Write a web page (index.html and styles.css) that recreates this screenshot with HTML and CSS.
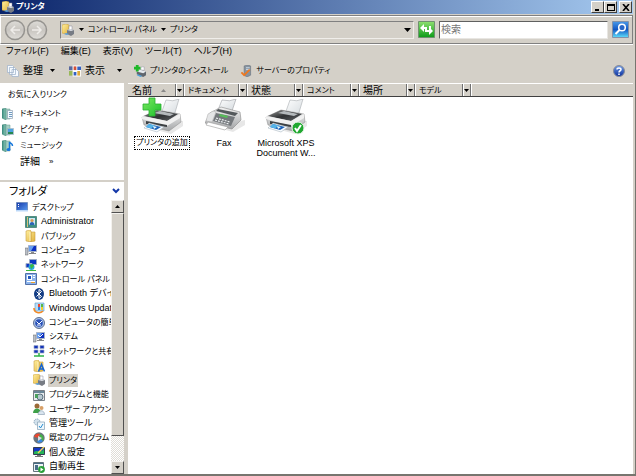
FILE: index.html
```html
<!DOCTYPE html>
<html lang="ja">
<head>
<meta charset="utf-8">
<title>プリンタ</title>
<link rel="stylesheet" href="styles.css">
</head>
<body>
<svg class="defs" aria-hidden="true">
  <defs>
    <linearGradient id="gGreen" x2="0" y2="1"><stop stop-color="#8ee070"/><stop offset="1" stop-color="#0c9a18"/></linearGradient>
    <linearGradient id="gPlus" x2="1" y2="1"><stop stop-color="#7ae860"/><stop offset="1" stop-color="#1cc02c"/></linearGradient>
    <linearGradient id="gBlue" x2="0" y2="1"><stop stop-color="#4a9ae8"/><stop offset=".5" stop-color="#1257c4"/><stop offset="1" stop-color="#5fe0fa"/></linearGradient>
    <linearGradient id="gBall" x2="0" y2="1"><stop stop-color="#6f9ce8"/><stop offset="1" stop-color="#0a2f9c"/></linearGradient>
    <linearGradient id="gFolder" x2="1" y2="1"><stop stop-color="#fff0a0"/><stop offset="1" stop-color="#e2b23c"/></linearGradient>
    <linearGradient id="gBook" x2="1" y2="0"><stop stop-color="#3a8c80"/><stop offset="1" stop-color="#8fc8b8"/></linearGradient>
    <linearGradient id="gScreen" x2="1" y2="1"><stop stop-color="#1436a8"/><stop offset="1" stop-color="#5a9cf0"/></linearGradient>
    <linearGradient id="gNav" x2="0" y2="1"><stop stop-color="#dedcd8"/><stop offset=".5" stop-color="#c8c5c0"/><stop offset="1" stop-color="#e0deda"/></linearGradient>
    <linearGradient id="gDark" x2="1" y2="1"><stop stop-color="#999"/><stop offset=".5" stop-color="#303234"/><stop offset="1" stop-color="#606468"/></linearGradient>
    <linearGradient id="gBody" x2="0" y2="1"><stop stop-color="#f4f4f4"/><stop offset="1" stop-color="#a4a6a8"/></linearGradient>
    <linearGradient id="gPaper" x2="1" y2="1"><stop stop-color="#fff"/><stop offset="1" stop-color="#d4dade"/></linearGradient>
  </defs>
  <symbol id="i-printer" viewBox="0 0 12 12"><path fill="url(#gFolder)" stroke="#c89a30" stroke-width=".5" d="M0 1l4-1 3 1v8l-3 1-4-1z"/><path fill="#fff" stroke="#889" stroke-width=".5" d="M7 2h3v4H7z"/><path fill="#777c84" d="M5 6l3-1 4 1v4l-3 2-4-2z"/><path fill="#dfe3e8" d="M5 6l4 1 3-1-4-1z"/><path fill="#58a0e0" d="M4 9l3 1-2 1-3-1z"/></symbol>
  <symbol id="i-book" viewBox="0 0 12 12"><path fill="url(#gBook)" stroke="#3a8070" stroke-width=".5" d="M0 1l4-1v12l-4-2z"/><path fill="#a6d0c4" stroke="#609a8c" stroke-width=".5" d="M4 1h4v10H4z"/></symbol>
  <symbol id="i-doc" viewBox="0 0 12 12"><use href="#i-book"/><path fill="#f7faff" stroke="#8395aa" stroke-width=".6" d="M5.500 2.500h5v8h-5z"/><path stroke="#6d9ac0" d="M7 4.500h3M7 6.500h3M7 8.500h3"/></symbol>
  <symbol id="i-pic" viewBox="0 0 12 12"><use href="#i-book"/><path fill="#fff" stroke="#7698b0" stroke-width=".6" d="M5.500 4.500h6v6h-6z"/><path fill="#4aa0e0" d="M6 5h5v3H6z"/><path fill="#258850" d="M6 8h5v2H6z"/></symbol>
  <symbol id="i-music" viewBox="0 0 12 12"><use href="#i-book"/><path fill="none" stroke="#1676dc" stroke-width="1.500" d="M7.500 9V2c1 2 3 1 3 4"/><ellipse cx="6.500" cy="9.500" rx="2" ry="1.600" fill="#1676dc"/></symbol>
  <symbol id="i-desktop" viewBox="0 0 12 12"><path fill="url(#gScreen)" stroke="#6a88b8" stroke-width=".8" d="M.5 1.500h11v8H.5z"/><path fill="#bcd8f8" d="M0 9h12v1.500H0z"/><path fill="#fff" d="M2 3h1v1H2zM2 5h1v1H2z"/></symbol>
  <symbol id="i-user" viewBox="0 0 12 12"><path fill="#3d8f82" stroke="#286658" stroke-width=".6" d="M.5.5h11v11H.5z"/><path fill="#d8c078" d="M2 1h1v10H2z"/><path fill="#cfe6f4" d="M4 2h6v7H4z"/><circle cx="7" cy="4.500" r="1.600" fill="#d49a52"/><path fill="#2b64b4" d="M4.500 9c0-4 5-4 5 0z"/></symbol>
  <symbol id="i-folder" viewBox="0 0 12 12"><path fill="url(#gFolder)" stroke="#cba040" stroke-width=".6" d="M1 1l4-1 1 1v11l-5-1zM6 2h4v9l-4 1z"/><path stroke="#fff9cc" d="M5 2v9"/></symbol>
  <symbol id="i-computer" viewBox="0 0 12 12"><path fill="#b9bec6" stroke="#666" stroke-width=".5" d="M0 4h3v7H0z"/><path fill="#0c30c0" stroke="#a8b4c8" d="M3.500 1.500h8v6h-8z"/><path fill="#69a0f0" d="M4 2l5 0-3 5H4z"/><path fill="#888" d="M6 8h3v1h2v1H4V9h2z"/></symbol>
  <symbol id="i-network" viewBox="0 0 12 12"><path fill="#0d36c4" stroke="#9caac4" d="M4.500.5h7v5h-7zM1 4.500h6v4H1z"/><circle cx="6.500" cy="8" r="3" fill="#28a8d8"/><path fill="#3bb840" d="M5 6l3-1 1 2-3 3zM1 11h10v1H1z"/></symbol>
  <symbol id="i-panel" viewBox="0 0 12 12"><path fill="#8cb4ec" stroke="#5370a8" d="M.5.5h11v11H.5z"/><path fill="#fff" d="M2 2h5v5H2zM8 2h2v1H8zM8 4h2v1H8zM2 8h8v1H2z"/><path fill="#2458c0" d="M3 3h3v3H3z"/><path fill="#e8a030" d="M6 9h4v1H6z"/></symbol>
  <symbol id="i-bt" viewBox="0 0 12 12"><ellipse cx="6" cy="6" rx="5" ry="6" fill="#123c84"/><path fill="none" stroke="#fff" d="M3.500 3.500l5 5L6 10.500v-9l2.500 2-5 5"/></symbol>
  <symbol id="i-update" viewBox="0 0 12 12"><path fill="#b6def8" stroke="#5696c8" stroke-width=".6" d="M2 1h9v8H2z"/><path fill="#f04830" d="M5 2h2v3H5z"/><path fill="#56b848" d="M8 2h2v3H8z"/><path fill="#3482e0" d="M5 5h2v3H5z"/><path fill="#f8cc28" d="M8 5h2v3H8z"/><path fill="none" stroke="#f08a28" stroke-width="1.600" d="M1 6c0 5 6 6 9 3"/></symbol>
  <symbol id="i-clock" viewBox="0 0 12 12"><circle cx="6" cy="6" r="5.500" fill="#a8c0e8" stroke="#607090"/><circle cx="6" cy="6" r="3.800" fill="#2850b8"/><path fill="none" stroke="#fff" d="M3.500 4.500L6 7l3-3M4 8h4"/></symbol>
  <symbol id="i-system" viewBox="0 0 12 12"><use href="#i-computer"/><path fill="none" stroke="#fff" d="M5 4l2 2 3-3"/></symbol>
  <symbol id="i-share" viewBox="0 0 12 12"><path fill="#1434b8" stroke="#9ba8c8" stroke-width=".7" d="M1 .5h4v3H1zM7 .5h4v3H7zM1 5h4v3H1zM7 5h4v3H7z"/><path stroke="#30b448" stroke-width="1.500" d="M6 8v3M1 11h10"/></symbol>
  <symbol id="i-font" viewBox="0 0 12 12"><use href="#i-folder"/><path fill="none" stroke="#1464d4" stroke-width="1.500" d="M5.500 11.500l3-7 3 7M7 9h3"/></symbol>
  <symbol id="i-programs" viewBox="0 0 12 12"><path fill="#e8ebee" stroke="#7a8088" d="M.5 1.500h11v10H.5z"/><path fill="#6b8798" d="M1 2h10v2H1z"/><circle cx="7" cy="8" r="3" fill="#b7c7d0" stroke="#5c7180"/><path fill="#4ca060" d="M2 5h3v4H2z"/></symbol>
  <symbol id="i-users" viewBox="0 0 12 12"><circle cx="4" cy="3" r="2.500" fill="#9c6a38"/><path fill="#3ea048" d="M0 10c0-6 8-6 8 0z"/><circle cx="8.500" cy="5" r="2" fill="#d8a068"/><path fill="#d8e4ee" stroke="#8498ac" stroke-width=".6" d="M5 11.500c0-5 6.500-5 6.500 0z"/></symbol>
  <symbol id="i-tools" viewBox="0 0 12 12"><circle cx="4" cy="4" r="3" fill="#d2e1ec" stroke="#7898b0" stroke-dasharray="1 1"/><path fill="#eef6fc" stroke="#8fa9bc" stroke-width=".8" d="M4.500 4h7v7.500h-7z"/><path fill="none" stroke="#238cd0" d="M6 8l1.500 2L10 6"/></symbol>
  <symbol id="i-default" viewBox="0 0 12 12"><circle cx="6" cy="6" r="5.700" fill="#68747c"/><path fill="#e84830" d="M6 6L1 5c1-4 5-4 6-3z"/><path fill="#44b048" d="M6 6l1-4c4 1 4 5 3 7z"/><path fill="#3888e0" d="M6 6l4 3c-3 3-6 1-6 1z"/><path fill="#d8dce0" d="M5 4l4 2-4 3z"/></symbol>
  <symbol id="i-personal" viewBox="0 0 12 12"><path fill="#1438c4" stroke="#333c50" d="M.5 1.500h11v7H.5z"/><path fill="#25b458" d="M1 6c4-3 6 2 10-3v5H1z"/><path stroke="#f8d858" stroke-width="1.500" d="M5 7l6-6"/><path fill="#777" d="M4 9h4v1h2v1H2v-1h2z"/></symbol>
  <symbol id="i-autoplay" viewBox="0 0 12 12"><path fill="#eef3f6" stroke="#63747c" d="M.5 1.500h10v9H.5z"/><path fill="#486e88" d="M1 2h9v1H1zM2 4h3v5H2z"/><circle cx="8.500" cy="8.500" r="3.400" fill="#28a038"/><path fill="#fff" d="M7.500 6.500l3 2-3 2z"/></symbol>
  <symbol id="i-organize" viewBox="0 0 12 12"><path fill="#f6faff" stroke="#9cb0c8" stroke-width=".7" d="M.5.5h5l1 1v6h-6zM2.500 2.500h5l1 1v6h-6zM5 4.500h4.500l2 2v5H5z"/></symbol>
  <symbol id="i-view" viewBox="0 0 13 12"><path fill="#5868a0" d="M0 1h4v4H0z"/><path fill="#98b858" d="M0 6h4v5H0z"/><path fill="#fff" d="M4 0h9v12H4z"/><path fill="#d05038" d="M5 1h3v4H5z"/><path fill="#3460c0" d="M9 1h4v4H9zM5 7h3v4H5z"/><path fill="#e0a838" d="M9 6h3v5H9z"/></symbol>
  <symbol id="i-add" viewBox="0 0 13 13"><path fill="#61676e" d="M3 7l4-2 6 2v4l-3 2-7-3z"/><path fill="#e6eaed" d="M3 7l7 2 3-2-6-2z"/><path fill="#fff" stroke="#889" stroke-width=".5" d="M8 2h3v4L7 5z"/><path fill="#4aa0dc" d="M4 10l5 2-2 1-4-2z"/><path fill="#1eb828" d="M2 0h3v2h2v3H5v2H2V5H0V2h2z"/></symbol>
  <symbol id="i-server" viewBox="0 0 12 13"><path fill="#8793a0" stroke="#606c78" stroke-width=".6" d="M4 1l4-1 3 1v10l-4 2-3-2z"/><path stroke="#cfe0ec" d="M6 3h4M6 5h4"/><path fill="none" stroke="#ee7820" stroke-width="2" d="M1 8l3 3 6-6"/></symbol>
  <symbol id="big-printer" viewBox="0 0 42 36">
    <path fill="#bbb" opacity=".35" d="M8 29l22 6 12-8v-5L14 24z"/>
    <path fill="url(#gPaper)" stroke="#a8acb0" stroke-width=".6" d="M25 1q7 2 13-1l-5 17-13-2z"/>
    <path fill="url(#gBody)" stroke="#888" stroke-width=".5" d="M1 18l15-7 23 4 1 8-12 9L3 26z"/>
    <path fill="url(#gDark)" d="M3 17l13-6 21 4-11 7z"/>
    <path fill="#b4b9bc" d="M13 14l6-2 14 3-4 2z"/>
    <path fill="#f0f0f0" d="M26 22l13-7v4l-13 8L1 20v-3z"/>
    <path fill="#3c4043" d="M5 22l21 4v2L5 25z"/>
    <path fill="#f8fcff" stroke="#9caab4" stroke-width=".5" d="M8 24l15 4-7 5-13-4z"/>
    <path fill="#1b60b8" d="M8 25l12 3-5 3-10-3z"/><path fill="#55b4e8" d="M8 25l6 1.500-4 3-5-1.500z"/><path fill="#e4f8f8" d="M12 27l4 1-3 2z"/>
  </symbol>
  <symbol id="big-fax" viewBox="0 0 40 36">
    <path fill="#bbb" opacity=".35" d="M10 28l18 5 12-7v-5z"/>
    <path fill="url(#gPaper)" stroke="#9ca0a4" stroke-width=".6" d="M17 1q8 2 14-1l-4 12-14-1z"/>
    <path fill="url(#gBody)" stroke="#888" stroke-width=".6" d="M5 14l11-6 19 5 1 8-9 9L0 24z"/>
    <path fill="#54595c" d="M13 10l20 4-3 3-19-5z"/>
    <path fill="#e4e5e6" stroke="#aaa" stroke-width=".5" d="M3 15l5-3 3 1-4 10-6-1z"/>
    <path fill="#74787c" d="M11 14l19 4-4 9-18-5z"/>
    <path fill="#56bd58" d="M15 15l8 2-1 2-8-2z"/>
    <path stroke="#edf0f2" stroke-width="1.200" stroke-dasharray="2 1" d="M11 19l14 4M10 21l14 4"/>
    <path fill="#fff" stroke="#9b9b9b" stroke-width=".6" d="M3 23l20 5-3 3-19-5z"/>
  </symbol>
  <symbol id="drop" viewBox="0 0 5 3"><path d="M0 0h5L2.500 3z"/></symbol>
</svg>

<div class="window">
  <header class="titlebar">
    <svg class="icon"><use href="#i-printer"/></svg>
    <h1>プリンタ</h1>
    <button class="cap" aria-label="最小化"><svg viewBox="0 0 8 7"><path d="M1 5h4v2H1z"/></svg></button>
    <button class="cap" aria-label="最大化"><svg viewBox="0 0 8 7"><path fill-rule="evenodd" d="M0 0h8v7H0zM1 2v4h6V2z"/></svg></button>
    <button class="cap close" aria-label="閉じる"><svg viewBox="0 0 8 7"><path fill="none" stroke="#000" stroke-width="1.600" d="M1 0l6 7M7 0L1 7"/></svg></button>
  </header>

  <div class="navbar">
    <button class="round" aria-label="戻る"><svg viewBox="0 0 22 22"><circle cx="11" cy="11" r="9.500" fill="url(#gNav)" stroke="#969490" stroke-width="1.500"/><path fill="none" stroke="#efedea" stroke-width="1.500" d="M16 11H7M11 7l-4 4 4 4"/></svg></button>
    <button class="round" aria-label="進む"><svg viewBox="0 0 22 22"><circle cx="11" cy="11" r="9.500" fill="url(#gNav)" stroke="#969490" stroke-width="1.500"/><path fill="none" stroke="#efedea" stroke-width="1.500" d="M6 11h9M11 7l4 4-4 4"/></svg></button>
    <nav class="address" aria-label="アドレス">
      <svg class="icon"><use href="#i-printer"/></svg>
      <svg class="drop"><use href="#drop"/></svg><a href="#">コントロール パネル</a>
      <svg class="drop"><use href="#drop"/></svg><a href="#">プリンタ</a>
      <button class="history" aria-label="履歴"><svg viewBox="0 0 7 4"><path d="M0 0h7L3.500 4z"/></svg></button>
    </nav>
    <button class="square" aria-label="更新"><svg viewBox="0 0 17 17"><path fill="url(#gGreen)" stroke="#709070" d="M.5.5h16v16H.5z"/><path fill="#fff" d="M2 7l4-4v3h3v5H7V8H6v3zM15 10l-4 4v-3H9V9h2V5h2v3z"/></svg></button>
    <input class="search" type="search" placeholder="検索" aria-label="検索">
    <button class="square" aria-label="検索を実行"><svg viewBox="0 0 17 17"><path fill="url(#gBlue)" stroke="#8492a8" d="M.5.5h16v16H.5z"/><circle cx="10" cy="6.500" r="3.300" fill="#2867c8" stroke="#fff" stroke-width="1.500"/><path stroke="#fff" stroke-width="2" d="M7.500 9l-4 4"/></svg></button>
  </div>

  <nav class="menubar" aria-label="メニュー">
    <button>ファイル(F)</button><button>編集(E)</button><button>表示(V)</button><button>ツール(T)</button><button>ヘルプ(H)</button>
  </nav>

  <div class="toolbar">
    <button class="organize"><svg class="icon"><use href="#i-organize"/></svg>整理<svg class="drop"><use href="#drop"/></svg></button>
    <button class="view"><svg class="icon"><use href="#i-view"/></svg>表示<svg class="drop"><use href="#drop"/></svg></button>
    <button class="install kana"><svg class="icon"><use href="#i-add"/></svg>プリンタのインストール</button>
    <button class="server kana"><svg class="icon"><use href="#i-server"/></svg>サーバーのプロパティ</button>
    <button class="help" aria-label="ヘルプ"><svg viewBox="0 0 12 12"><circle cx="6" cy="6" r="5.500" fill="url(#gBall)" stroke="#888c98"/><path fill="none" stroke="#fff" stroke-width="1.500" d="M4 4.500c0-2 4-2 4 0 0 1.500-2 1-2 3M6 8.500v1.500"/></svg></button>
  </div>

  <div class="body">
    <aside class="sidebar">
      <section class="favorites kana">
        <h2>お気に入りリンク</h2>
        <ul>
          <li><a href="#"><svg class="icon"><use href="#i-doc"/></svg>ドキュメント</a></li>
          <li><a href="#"><svg class="icon"><use href="#i-pic"/></svg>ピクチャ</a></li>
          <li><a href="#"><svg class="icon"><use href="#i-music"/></svg>ミュージック</a></li>
          <li class="more"><a href="#">詳細 <span>»</span></a></li>
        </ul>
      </section>
      <button class="folders">フォルダ<svg viewBox="0 0 8 6"><path fill="none" stroke="#1438a8" stroke-width="2" d="M1 1l3 3 3-3"/></svg></button>
      <div class="tree-pane">
        <ul class="tree">
          <li class="l0"><a href="#"><svg class="icon"><use href="#i-desktop"/></svg><span class="kana">デスクトップ</span></a></li>
          <li class="l1"><a href="#"><svg class="icon"><use href="#i-user"/></svg><span>Administrator</span></a></li>
          <li class="l1"><a href="#"><svg class="icon"><use href="#i-folder"/></svg><span class="kana">パブリック</span></a></li>
          <li class="l1"><a href="#"><svg class="icon"><use href="#i-computer"/></svg><span class="kana">コンピュータ</span></a></li>
          <li class="l1"><a href="#"><svg class="icon"><use href="#i-network"/></svg><span class="kana">ネットワーク</span></a></li>
          <li class="l1"><a href="#"><svg class="icon"><use href="#i-panel"/></svg><span class="kana">コントロール パネル</span></a></li>
          <li class="l2"><a href="#"><svg class="icon"><use href="#i-bt"/></svg><span>Bluetooth デバイス</span></a></li>
          <li class="l2"><a href="#"><svg class="icon"><use href="#i-update"/></svg><span>Windows Update</span></a></li>
          <li class="l2"><a href="#"><svg class="icon"><use href="#i-clock"/></svg><span class="kana">コンピュータの簡単操作</span></a></li>
          <li class="l2"><a href="#"><svg class="icon"><use href="#i-system"/></svg><span class="kana">システム</span></a></li>
          <li class="l2"><a href="#"><svg class="icon"><use href="#i-share"/></svg><span class="kana">ネットワークと共有</span></a></li>
          <li class="l2"><a href="#"><svg class="icon"><use href="#i-font"/></svg><span class="kana">フォント</span></a></li>
          <li class="l2"><a href="#" aria-current="page"><svg class="icon"><use href="#i-printer"/></svg><span class="kana">プリンタ</span></a></li>
          <li class="l2"><a href="#"><svg class="icon"><use href="#i-programs"/></svg><span class="kana">プログラムと機能</span></a></li>
          <li class="l2"><a href="#"><svg class="icon"><use href="#i-users"/></svg><span class="kana">ユーザー アカウント</span></a></li>
          <li class="l2"><a href="#"><svg class="icon"><use href="#i-tools"/></svg><span>管理ツール</span></a></li>
          <li class="l2"><a href="#"><svg class="icon"><use href="#i-default"/></svg><span class="kana">既定のプログラム</span></a></li>
          <li class="l2"><a href="#"><svg class="icon"><use href="#i-personal"/></svg><span>個人設定</span></a></li>
          <li class="l2"><a href="#"><svg class="icon"><use href="#i-autoplay"/></svg><span>自動再生</span></a></li>
        </ul>
        <div class="scrollbar">
          <button aria-label="上へ"><svg viewBox="0 0 5 3"><path d="M0 3h5L2.500 0z"/></svg></button>
          <div class="thumb"></div>
          <div class="track"></div>
          <button aria-label="下へ"><svg viewBox="0 0 5 3"><path d="M0 0h5L2.500 3z"/></svg></button>
        </div>
      </div>
    </aside>

    <main class="content">
      <div class="columns">
        <div class="col"><button class="name">名前<svg class="sort" viewBox="0 0 5 3"><path fill="#888" d="M0 3h5L2.500 0z"/></svg></button><button class="filter" aria-label="名前で絞り込み"><svg><use href="#drop"/></svg></button></div>
        <div class="col wide"><button class="name kana">ドキュメント</button><button class="filter" aria-label="ドキュメントで絞り込み"><svg><use href="#drop"/></svg></button></div>
        <div class="col"><button class="name">状態</button><button class="filter" aria-label="状態で絞り込み"><svg><use href="#drop"/></svg></button></div>
        <div class="col"><button class="name kana">コメント</button><button class="filter" aria-label="コメントで絞り込み"><svg><use href="#drop"/></svg></button></div>
        <div class="col"><button class="name">場所</button><button class="filter" aria-label="場所で絞り込み"><svg><use href="#drop"/></svg></button></div>
        <div class="col"><button class="name kana">モデル</button><button class="filter" aria-label="モデルで絞り込み"><svg><use href="#drop"/></svg></button></div>
      </div>
      <ul class="items">
        <li><a href="#"><svg viewBox="0 0 42 38"><use href="#big-printer" y="2" width="42" height="36"/><path fill="url(#gPlus)" stroke="#28b030" stroke-width=".8" d="M8 1h6v6h6v6h-6v6H8v-6H2V7h6z"/></svg><span class="focused kana">プリンタの追加</span></a></li>
        <li><a href="#"><svg viewBox="0 0 42 38"><use href="#big-fax" x="2" y="2" width="40" height="36"/></svg><span>Fax</span></a></li>
        <li><a href="#"><svg viewBox="0 0 42 38"><use href="#big-printer" y="2" width="42" height="36"/><circle cx="33" cy="31" r="6" fill="#20a830" stroke="#e8f4e8"/><path fill="none" stroke="#fff" stroke-width="2" d="M30 31l2 3 4-6"/></svg><span>Microsoft XPS Document W...</span></a></li>
      </ul>
    </main>
  </div>
</div>
</body>
</html>
```

FILE: styles.css
```css
* { box-sizing: border-box; }
body {
  margin: 0;
  background: #d4d0c8;
  color: #000;
  font: 10px/14px "Liberation Sans", "Noto Sans CJK JP", sans-serif;
  font-feature-settings: "palt";
}
button, input { font: inherit; font-feature-settings: inherit; color: inherit; }
button { margin: 0; padding: 0; border: 0; background: none; white-space: nowrap; }
a { color: inherit; text-decoration: none; }
ul { margin: 0; padding: 0; list-style: none; }
h1, h2 { margin: 0; font: inherit; }
svg { display: block; flex: none; }
.kana { font-size: 8px; }
.defs { position: absolute; width: 0; height: 0; }
.icon { width: 12px; height: 12px; }
.drop { width: 5px; height: 3px; }

.window {
  display: flex;
  flex-direction: column;
  height: 100vh;
  padding-right: 2px;
  border-right: 1px solid #77756f;
  border-bottom: 2px solid #77756f;
}

.titlebar {
  display: flex;
  align-items: center;
  height: 14px;
  padding-left: 2px;
  background: linear-gradient(90deg, #0a246a, #a6caf0);
  color: #fff;
}
.titlebar h1 { flex: 1; padding-left: 2px; font-weight: bold; font-size: 8px; }
.cap {
  display: grid;
  place-items: center;
  width: 13px;
  height: 12px;
  background: #d4d0c8;
  border: 1px solid;
  border-color: #fff #404040 #404040 #fff;
}
.cap svg { width: 8px; height: 7px; }
.close { margin: 0 1px 0 2px; }

.navbar {
  display: flex;
  align-items: center;
  height: 29px;
  margin-top: 1px;
  padding: 0 3px;
  border: 1px solid #808080;
  border-left-color: #fff;
  box-shadow: inset 0 1px #fff, 0 1px #fff;
}
.round svg { width: 22px; height: 22px; }
.address {
  display: flex;
  flex: 1;
  align-items: center;
  gap: 4px;
  height: 18px;
  margin: 0 4px 0 12px;
  padding: 0 2px 0 1px;
  border: 1px solid;
  border-color: #808080 #f0eeea #f0eeea #808080;
  font-size: 8px;
}
.address .icon { margin-right: 1px; }
.history { margin-left: auto; }
.history svg { width: 7px; height: 4px; }
.square svg { width: 17px; height: 17px; }
.search {
  width: 169px;
  height: 18px;
  margin: 0 4px;
  padding: 0 1px;
  border: 1px solid;
  border-color: #606060 #e8e6e2 #e8e6e2 #606060;
  border-radius: 0;
  background: #fff;
  appearance: none;
}
.search::placeholder { color: #777; opacity: 1; }

.menubar { display: flex; gap: 12px; padding: 0 6px; font-size: 9px; }

.toolbar { display: flex; align-items: center; height: 25px; padding: 0 8px 0 7px; }
.toolbar button { display: flex; align-items: center; gap: 4px; }
.toolbar .drop { margin-left: 3px; }
.toolbar .view { margin-left: 14px; }
.toolbar .view .drop { margin-left: 8px; }
.toolbar .install { margin-left: 12px; }
.toolbar .server { margin-left: 12px; }
.toolbar .help { margin-left: auto; }
.help svg { width: 12px; height: 12px; }

.body { display: flex; flex: 1; min-height: 0; gap: 4px; }
.sidebar { display: flex; flex-direction: column; width: 124px; background: #fff; }
.favorites { height: 97px; padding-top: 5px; }
.favorites h2 { padding: 0 8px 4px; }
.favorites a { display: flex; align-items: center; gap: 6px; height: 16px; padding-left: 2px; }
.favorites .more a { gap: 9px; padding-left: 20px; font-size: 10px; }
.more span { font-size: 8px; }
.folders {
  display: flex;
  align-items: center;
  justify-content: space-between;
  height: 20px;
  padding: 0 4px 0 9px;
  border-top: 2px solid #d4d0c8;
  font-size: 11px;
}
.folders svg { width: 8px; height: 6px; }

.tree-pane { display: flex; flex: 1; min-height: 0; }
.tree { display: grid; flex: 1; min-width: 0; grid-auto-rows: 1fr; font-size: 9px; }
.tree li { min-width: 0; overflow: hidden; }
.tree a { display: flex; align-items: center; gap: 3px; height: 100%; white-space: nowrap; }
.tree span { padding: 0 1px; line-height: 13px; }
.l0 { padding-left: 16px; }
.l1 { padding-left: 25px; }
.l2 { padding-left: 33px; }
.tree a[aria-current] span { background: #d4d0c8; }

.scrollbar { display: flex; flex-direction: column; width: 13px; }
.scrollbar button, .thumb {
  background: #d4d0c8;
  border: 1px solid;
  border-color: #f4f2ee #505050 #505050 #f4f2ee;
}
.scrollbar button { display: grid; place-items: center; height: 13px; }
.scrollbar svg { width: 5px; height: 3px; }
.thumb { flex: 9; }
.track { flex: 1; background: repeating-conic-gradient(#fff 0 25%, #e0ddd6 0 50%) 0 0 / 2px 2px; }

.content { flex: 1; min-width: 0; background: #fff; }
.columns {
  display: flex;
  height: 14px;
  background: #d4d0c8;
  border-top: 1px solid #fff;
  border-bottom: 1px solid #404040;
}
.col { display: flex; width: 56px; }
.wide { width: 63px; }
.name { display: flex; flex: 1; align-items: center; gap: 9px; padding-left: 4px; line-height: 11px; }
.sort { width: 5px; height: 3px; }
.filter {
  display: grid;
  place-items: center;
  width: 9px;
  border: 1px solid #707070;
  border-width: 0 1px;
  box-shadow: inset 1px 0 #fff, 1px 0 #fff;
}
.filter svg { width: 5px; height: 3px; }

.items { display: flex; padding-left: 3px; }
.items li { width: 62px; }
.items a { display: flex; flex-direction: column; align-items: center; text-align: center; line-height: 10px; font-size: 9px; }
.items svg { width: 42px; height: 38px; margin-bottom: 2px; }
.items span { padding: 1px; }
.items .focused { outline: 1px dotted #000; white-space: nowrap; font-size: 8px; }
```
